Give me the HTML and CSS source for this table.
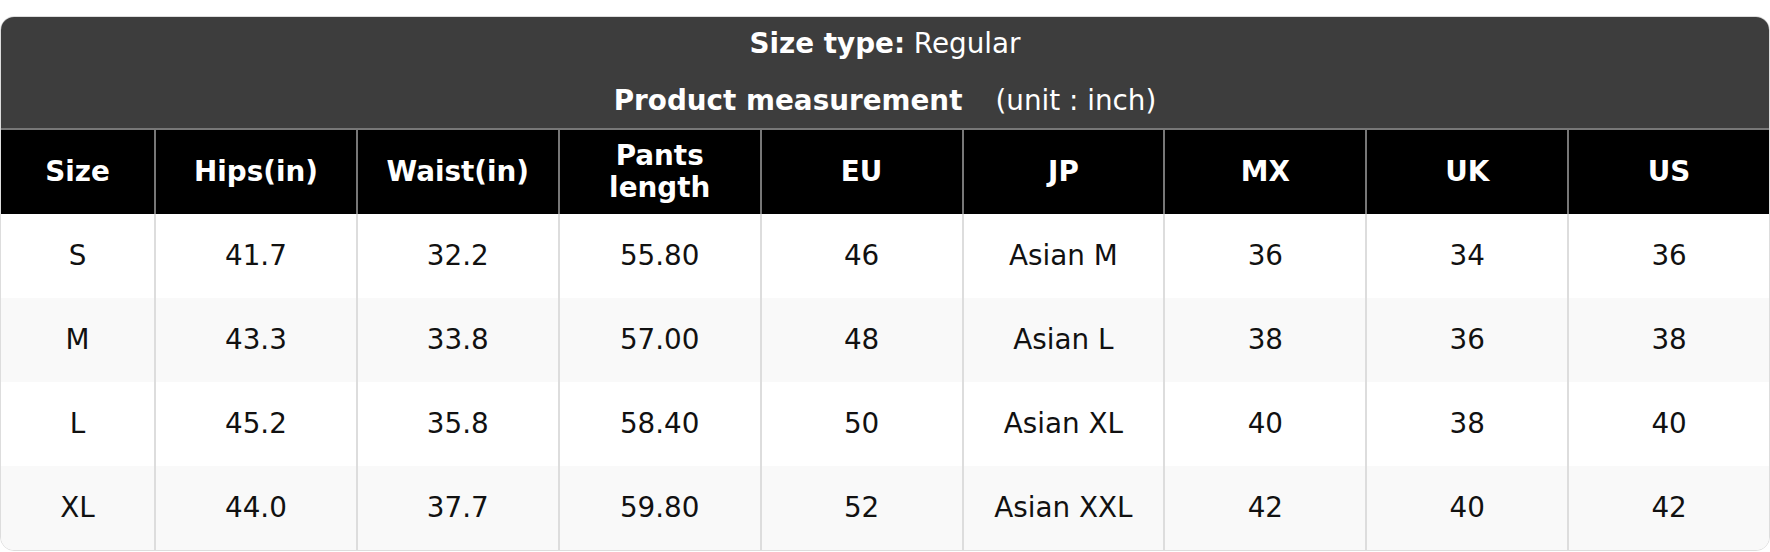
FILE: index.html
```html
<!DOCTYPE html>
<html lang="en">
<head>
<meta charset="utf-8">
<title>Size chart</title>
<link rel="stylesheet" href="styles.css">
</head>
<body>
<div class="page">
  <div class="chart">
    <div class="caption">
      <div class="caption-line"><b>Size type:</b> Regular</div>
      <div class="caption-line"><b>Product measurement</b><span class="unit">(unit : inch)</span></div>
    </div>
    <table class="sizes">
      <thead>
        <tr>
          <th class="first">Size</th>
          <th>Hips(in)</th>
          <th>Waist(in)</th>
          <th>Pants<br>length</th>
          <th>EU</th>
          <th>JP</th>
          <th>MX</th>
          <th>UK</th>
          <th>US</th>
        </tr>
      </thead>
      <tbody>
        <tr><td>S</td><td>41.7</td><td>32.2</td><td>55.80</td><td>46</td><td>Asian M</td><td>36</td><td>34</td><td>36</td></tr>
        <tr><td>M</td><td>43.3</td><td>33.8</td><td>57.00</td><td>48</td><td>Asian L</td><td>38</td><td>36</td><td>38</td></tr>
        <tr><td>L</td><td>45.2</td><td>35.8</td><td>58.40</td><td>50</td><td>Asian XL</td><td>40</td><td>38</td><td>40</td></tr>
        <tr><td>XL</td><td>44.0</td><td>37.7</td><td>59.80</td><td>52</td><td>Asian XXL</td><td>42</td><td>40</td><td>42</td></tr>
      </tbody>
    </table>
  </div>
</div>
</body>
</html>
```
FILE: styles.css
```css
html, body {
  margin: 0;
  padding: 0;
  background: #ffffff;
}

body {
  font-family: "DejaVu Sans", Verdana, sans-serif;
  color: #111111;
}

.page {
  padding-top: 16px;
}

.chart {
  border: 1px solid #dddddd;
  border-radius: 14px;
  overflow: hidden;
  background: #ffffff;
}

.caption {
  background: #3d3d3d;
  color: #ffffff;
  text-align: center;
  font-size: 27.8px;
  line-height: 32px;
  padding: 11px 0 11px;
}

.caption-line + .caption-line {
  margin-top: 25px;
}

.unit {
  margin-left: 33px;
}

.sizes {
  width: 100%;
  border-collapse: separate;
  border-spacing: 0;
  table-layout: fixed;
  font-size: 27.8px;
  line-height: 32px;
}

.sizes th {
  background: #000000;
  color: #ffffff;
  font-weight: bold;
  text-align: center;
  padding: 10px 4px;
  border-top: 2px solid #777777;
  border-left: 2px solid #777777;
}

.sizes th.first {
  width: 153px;
  box-sizing: border-box;
  border-left: none;
}

.sizes td {
  text-align: center;
  padding: 26px 4px;
  border-left: 2px solid #dddddd;
  color: #111111;
}

.sizes td:first-child {
  border-left: none;
}

.sizes tbody tr:nth-child(even) td {
  background: #f9f9f9;
}
```
